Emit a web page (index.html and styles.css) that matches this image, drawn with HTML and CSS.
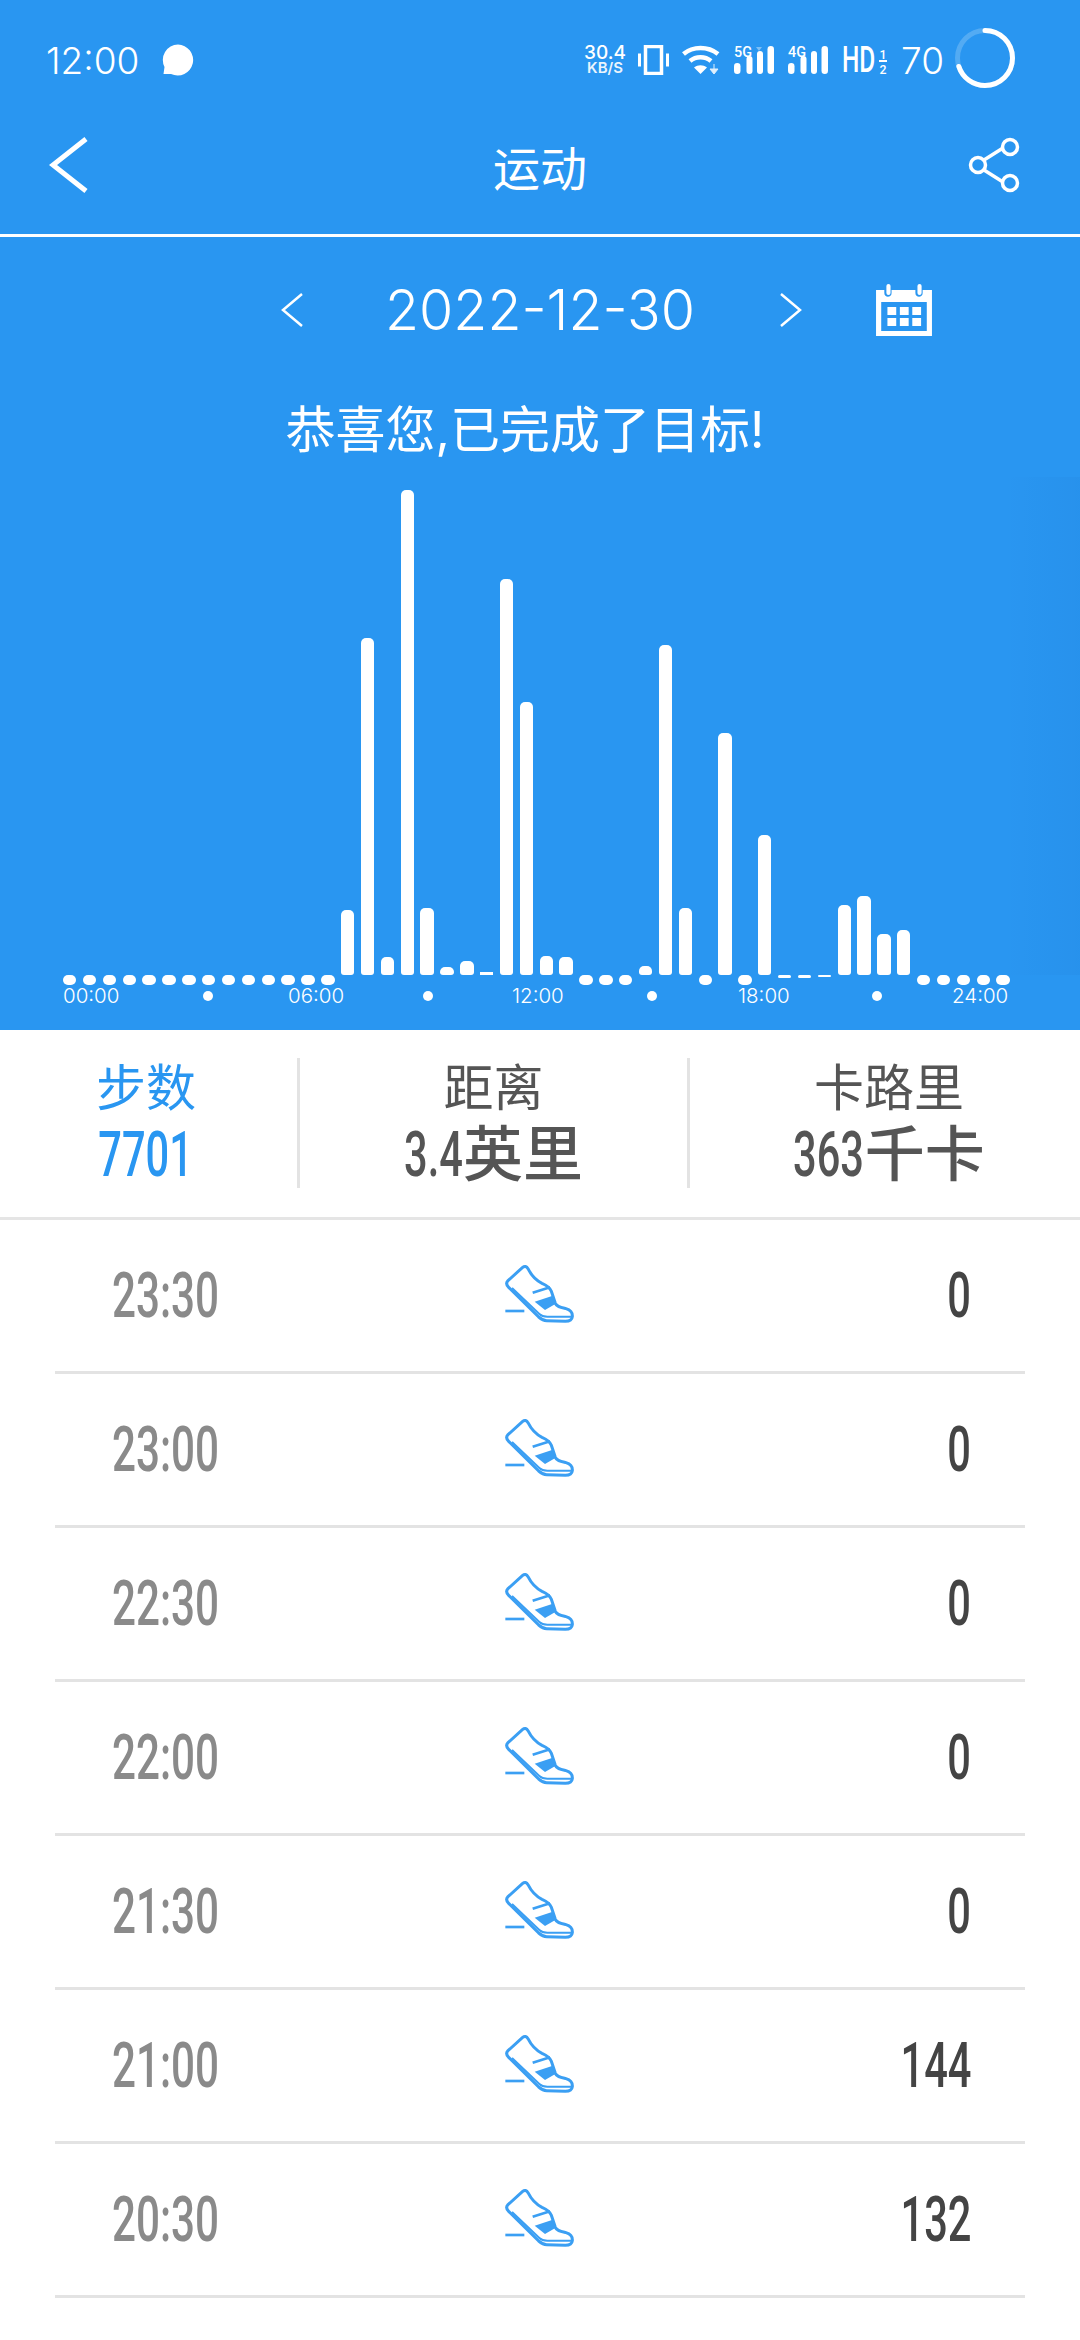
FILE: index.html
```html
<!DOCTYPE html>
<html lang="zh-CN">
<head>
    <meta charset="UTF-8">
    <meta name="viewport" content="width=device-width, initial-scale=1.0">
    <title>运动</title>
    <link rel="stylesheet" href="styles.css">
</head>
<body>
    <svg class="defs" width="0" height="0">
        <symbol id="shoe" viewBox="0 0 300 240">
            <path d="M46 183H103" fill="none" stroke="currentColor" stroke-width="8"/>
            <path d="M98 52C104 47 110 49 114 56C122 72 136 90 156 100C172 107 180 112 184 124L196 160C200 170 212 172 228 176C242 180 248 188 247 200C246 212 238 214 226 214L170 212C160 212 154 208 146 201L56 112C48 104 48 98 54 92Z" fill="none" stroke="currentColor" stroke-width="9" stroke-linejoin="round"/>
            <path d="M66 114L148 192C154 198 160 200 172 200L244 200" fill="none" stroke="currentColor" stroke-width="6"/>
            <path d="M128 128L180 112" fill="none" stroke="currentColor" stroke-width="8"/>
            <path d="M134 155L186 138L196 162L165 180Z" fill="currentColor"/>
        </symbol>
    </svg>

    <header class="top">
        <div class="status">
            <span class="clock">12:00</span>
            <svg class="msg" width="34" height="34" viewBox="0 0 34 34"><path d="M17 1.500A15.500 15.500 0 1 1 10 31L2.500 31L3.500 24A15.500 15.500 0 0 1 17 1.500Z" fill="#fff"/></svg>
            <span class="spacer"></span>
            <div class="speed"><span>30.4</span><span class="speed-unit">KB/S</span></div>
            <svg width="31" height="30" viewBox="0 0 31 30" class="ic-vib"><path d="M7.500 1.500H23.500V28.500H7.500Z" fill="none" stroke="#fff" stroke-width="3.500"/><path d="M1.500 8.500V21.500M29.500 8.500V21.500" stroke="#fff" stroke-width="3"/></svg>
            <svg width="38" height="30" viewBox="0 0 38 30" class="ic-wifi"><path d="M1.500 9C11 1 26 1 36 9" fill="none" stroke="#fff" stroke-width="4.500"/><path d="M8 16C14 11 23 11 29 16" fill="none" stroke="#fff" stroke-width="4.500"/><path d="M12 22.500C16 19.500 21 19.500 25 22.500L18.500 29Z" fill="#fff"/><path d="M32 19V24M28 24H36L32 29Z" fill="#fff" stroke="#fff" stroke-width="1" opacity=".85"/></svg>
            <svg width="40" height="40" viewBox="0 -5 40 40" class="ic-sig"><text x="0" y="12" class="sig-text" textLength="18" lengthAdjust="spacingAndGlyphs">5G</text><path d="M22 2H28L25 6Z" fill="#fff" opacity=".4"/><rect x="0" y="18" width="6.500" height="11" rx="3.250" fill="#fff"/><rect x="12.500" y="11" width="6" height="18" rx="3" fill="#fff"/><rect x="23" y="6" width="6" height="23" rx="3" fill="#fff"/><rect x="33.500" y="1" width="6.500" height="28" rx="3.250" fill="#fff"/></svg>
            <svg width="40" height="40" viewBox="0 -5 40 40" class="ic-sig"><text x="0" y="12" class="sig-text" textLength="18" lengthAdjust="spacingAndGlyphs">4G</text><rect x="0" y="18" width="6.500" height="11" rx="3.250" fill="#fff"/><rect x="12.500" y="11" width="6" height="18" rx="3" fill="#fff"/><rect x="23" y="6" width="6" height="23" rx="3" fill="#fff"/><rect x="33.500" y="1" width="6.500" height="28" rx="3.250" fill="#fff"/></svg>
            <span class="hd">HD</span>
            <svg width="8" height="44" viewBox="0 0 8 44" class="ic-half"><text x="0.500" y="21" class="hd-small" textLength="7" lengthAdjust="spacingAndGlyphs">1</text><path d="M0 23H8" stroke="#fff" stroke-width="2"/><text x="0.500" y="35.500" class="hd-small" textLength="7" lengthAdjust="spacingAndGlyphs">2</text></svg>
            <span class="batt-num">70</span>
            <svg class="batt" width="62" height="62" viewBox="0 0 62 62">
                <circle cx="31" cy="31" r="27.500" fill="none" stroke="#fff" stroke-opacity=".2" stroke-width="5"/>
                <circle cx="31" cy="31" r="27.500" fill="none" stroke="#fff" stroke-width="5" stroke-linecap="round" pathLength="100" stroke-dasharray="70 30" transform="rotate(-90 31 31)"/>
            </svg>
        </div>

        <div class="nav">
            <svg width="40" height="60" viewBox="0 0 40 60"><path d="M37 4L4 30L37 56" fill="none" stroke="#fff" stroke-width="5"/></svg>
            <h1 class="nav-title">运动</h1>
            <svg class="ic-share" width="54" height="56" viewBox="0 0 54 56"><path d="M17 23L36 11M17 33L36 45" stroke="#fff" stroke-width="3.500"/><circle cx="43" cy="10" r="7.500" fill="none" stroke="#fff" stroke-width="3.500"/><circle cx="11" cy="28" r="7.500" fill="none" stroke="#fff" stroke-width="3.500"/><circle cx="43" cy="46" r="7.500" fill="none" stroke="#fff" stroke-width="3.500"/></svg>
        </div>
    </header>

    <section class="panel">
        <div class="date-row">
            <svg width="24" height="36" viewBox="0 0 24 36"><path d="M22 2L3 18L22 34" fill="none" stroke="#fff" stroke-width="2.500"/></svg>
            <span class="date">2022-12-30</span>
            <svg width="24" height="36" viewBox="0 0 24 36"><path d="M2 2L21 18L2 34" fill="none" stroke="#fff" stroke-width="2.500"/></svg>
            <svg class="cal" width="58" height="52" viewBox="0 0 56 52" preserveAspectRatio="none">
                <path d="M1 6H9V9C9 14 16 14 16 9V6H39V9C39 14 46 14 46 9V6H55V52H1Z" fill="#fff"/>
                <rect x="11" y="0" width="4" height="11" rx="2" fill="#fff"/><rect x="41" y="0" width="4" height="11" rx="2" fill="#fff"/>
                <rect x="6" y="18" width="44" height="29" fill="#2996f1"/>
                <rect x="12" y="23" width="8.500" height="8" fill="#fff"/><rect x="24" y="23" width="8.500" height="8" fill="#fff"/><rect x="36" y="23" width="8.500" height="8" fill="#fff"/>
                <rect x="12" y="34" width="8.500" height="8" fill="#fff"/><rect x="24" y="34" width="8.500" height="8" fill="#fff"/><rect x="36" y="34" width="8.500" height="8" fill="#fff"/>
            </svg>
        </div>
        <p class="congrats">恭喜您,已完成了目标!</p>

        <div class="bars">
            <i class="dot"></i><i class="dot"></i><i class="dot"></i><i class="dot"></i><i class="dot"></i><i class="dot"></i><i class="dot"></i>
            <i class="dot"></i><i class="dot"></i><i class="dot"></i><i class="dot"></i><i class="dot"></i><i class="dot"></i><i class="dot"></i>
            <i class="bar" style="height:65px"></i>
            <i class="bar" style="height:337px"></i>
            <i class="bar" style="height:18px"></i>
            <i class="bar" style="height:485px"></i>
            <i class="bar" style="height:67px"></i>
            <i class="bar" style="height:8px"></i>
            <i class="bar" style="height:14px"></i>
            <i class="bar flat" style="height:3px"></i>
            <i class="bar" style="height:396px"></i>
            <i class="bar" style="height:273px"></i>
            <i class="bar" style="height:19px"></i>
            <i class="bar" style="height:18px"></i>
            <i class="dot"></i><i class="dot"></i><i class="dot"></i>
            <i class="bar" style="height:9px"></i>
            <i class="bar" style="height:330px"></i>
            <i class="bar" style="height:67px"></i>
            <i class="dot"></i>
            <i class="bar" style="height:242px"></i>
            <i class="dot"></i>
            <i class="bar" style="height:140px"></i>
            <i class="dash"></i><i class="dash"></i><i class="dash thin"></i>
            <i class="bar" style="height:70px"></i>
            <i class="bar" style="height:79px"></i>
            <i class="bar" style="height:41px"></i>
            <i class="bar" style="height:45px"></i>
            <i class="dot"></i><i class="dot"></i><i class="dot"></i><i class="dot"></i><i class="dot"></i>
        </div>
        <div class="axis">
            <span>00:00</span><i class="tick"></i>
            <span>06:00</span><i class="tick"></i>
            <span>12:00</span><i class="tick"></i>
            <span>18:00</span><i class="tick"></i>
            <span>24:00</span>
        </div>
    </section>

    <section class="tabs">
        <div class="tab tab-on">
            <div class="tab-label">步数</div>
            <div class="tab-value"><span class="narrow">7701</span></div>
        </div>
        <div class="tab tab-mid">
            <div class="tab-label">距离</div>
            <div class="tab-value"><span class="narrow pull-a">3.4</span>英里</div>
        </div>
        <div class="tab tab-end">
            <div class="tab-label">卡路里</div>
            <div class="tab-value"><span class="narrow pull-b">363</span>千卡</div>
        </div>
    </section>

    <ul class="rows">
        <li class="row"><span class="time">23:30</span><svg class="shoe"><use href="#shoe"/></svg><span class="steps">0</span></li>
        <li class="row"><span class="time">23:00</span><svg class="shoe"><use href="#shoe"/></svg><span class="steps">0</span></li>
        <li class="row"><span class="time">22:30</span><svg class="shoe"><use href="#shoe"/></svg><span class="steps">0</span></li>
        <li class="row"><span class="time">22:00</span><svg class="shoe"><use href="#shoe"/></svg><span class="steps">0</span></li>
        <li class="row"><span class="time">21:30</span><svg class="shoe"><use href="#shoe"/></svg><span class="steps">0</span></li>
        <li class="row"><span class="time">21:00</span><svg class="shoe"><use href="#shoe"/></svg><span class="steps">144</span></li>
        <li class="row"><span class="time">20:30</span><svg class="shoe"><use href="#shoe"/></svg><span class="steps">132</span></li>
    </ul>
</body>
</html>
```

FILE: styles.css
```css
*{
    box-sizing: border-box;
}
html, body{
    margin: 0;
    height: 2340px;
    overflow: hidden;
    background-color: #fff;
}
body{
    font-family: Inter, "Noto Sans CJK SC", sans-serif;
}
.defs{
    display: block;
    height: 0;
}

/* blue header */
.top{
    background-color: #2996f1;
    color: #fff;
    height: 237px;
    border-bottom: 3px solid #fff;
}
.status{
    height: 100px;
    padding: 20px 64px 0 46px;
    display: flex;
    align-items: center;
}
.clock{
    font-size: 37px;
    font-weight: 350;
}
.msg{
    margin-left: 22px;
}
.spacer{
    flex: 1;
}
.speed{
    display: flex;
    flex-direction: column;
    align-items: center;
    font-size: 19px;
    line-height: 16px;
    font-weight: 500;
}
.speed-unit{
    font-size: 15px;
    line-height: 14px;
    font-weight: 600;
    opacity: .9;
}
.ic-vib{
    margin-left: 12px;
}
.ic-wifi{
    margin-left: 13px;
}
.ic-sig{
    margin-left: 14px;
}
.sig-text, .hd-small{
    font-family: Roboto, sans-serif;
    fill: #fff;
    font-weight: 500;
}
.sig-text{
    font-size: 15px;
}
.hd-small{
    font-size: 12px;
}
.hd{
    display: inline-block;
    margin: 0 -16px 0 14px;
    font-family: Roboto, sans-serif;
    font-size: 36px;
    font-weight: 500;
    transform: scaleX(.68);
    transform-origin: left center;
}
.ic-half{
    margin-left: 4px;
}
.batt-num{
    margin-left: 14px;
    font-size: 37px;
    font-weight: 350;
}
.batt{
    margin-left: 10px;
    margin-top: -4px;
}
.nav{
    height: 134px;
    padding: 0 59px 4px 49px;
    display: grid;
    grid-template-columns: 1fr auto 1fr;
    align-items: center;
}
.nav-title{
    margin: 0 0 0 10px;
    font-size: 47px;
    font-weight: 400;
}
.ic-share{
    justify-self: end;
}

/* date + chart */
.panel{
    background-color: #2996f1;
    color: #fff;
    height: 793px;
}
.date-row{
    height: 146px;
    padding-left: 280px;
    display: flex;
    align-items: center;
}
.date{
    margin: 0 84px 0 81px;
    font-size: 55.500px;
    font-weight: 350;
    line-height: 1;
}
.cal{
    margin-left: 72px;
}
.congrats{
    margin: 0;
    height: 94px;
    text-align: center;
    font-size: 50px;
    font-weight: 400;
    line-height: 94px;
    padding-right: 30px;
}
.bars{
    height: 498px;
    padding: 0 70px 0 63px;
    display: flex;
    justify-content: space-between;
    align-items: flex-end;
    background-image: linear-gradient(90deg, transparent 93%, rgba(0, 40, 120, .04));
}
.bar, .dot, .dash{
    display: block;
    width: 13.400px;
    background-color: #fff;
}
.bar{
    border-radius: 5px 5px 3px 3px;
}
.bar.flat{
    border-radius: 0;
}
.dot{
    height: 10px;
    margin-bottom: -10px;
    border-radius: 5px;
}
.dash{
    height: 3px;
    margin-bottom: -3px;
    border-radius: 2px;
}
.dash.thin{
    height: 2px;
    margin-bottom: -2px;
}
.axis{
    margin-top: 10px;
    padding-left: 63px;
    display: grid;
    grid-template-columns: 140px 85px 135px 89px 135px 91px 134px 80px auto;
    align-items: center;
    font-size: 20.500px;
    font-weight: 300;
    line-height: 22px;
}
.tick{
    display: block;
    width: 10px;
    height: 10px;
    border-radius: 50%;
    background-color: #fff;
}

/* summary tabs */
.tabs{
    height: 190px;
    padding-top: 28px;
    display: flex;
    border-bottom: 3px solid #e5e5e5;
    color: #555;
}
.tab{
    height: 130px;
    text-align: center;
}
.tab-on{
    width: 300px;
    padding-right: 5px;
    color: #2996f1;
    border-right: 3px solid #e3e3e3;
}
.tab-mid{
    width: 390px;
    padding-right: 0;
    border-right: 3px solid #e3e3e3;
}
.tab-end{
    flex: 1;
    padding-left: 8px;
}
.tab-label{
    font-size: 50px;
    line-height: 60px;
    font-weight: 400;
}
.tab-value{
    font-size: 60px;
    line-height: 66px;
    font-weight: 500;
    margin-top: 3px;
    white-space: nowrap;
}
.narrow, .steps{
    display: inline-block;
    font-family: Roboto, sans-serif;
    font-size: 63px;
    font-weight: 500;
    transform: scaleX(.66);
}
.time{
    display: inline-block;
    font-family: Roboto, sans-serif;
    font-size: 63px;
    font-weight: 500;
    transform: scaleX(.67);
}
.pull-a{
    transform-origin: left center;
    margin-right: -30px;
}
.pull-b{
    transform-origin: left center;
    margin-right: -36px;
}

/* half hour list */
.rows{
    list-style: none;
    margin: 0;
    padding: 0 55px;
}
.row{
    height: 154px;
    display: grid;
    grid-template-columns: 1fr 70px 1fr;
    align-items: center;
    border-bottom: 3px solid #e3e3e3;
}
.time{
    justify-self: start;
    margin-left: 57px;
    color: #8a8a8a;
    transform-origin: left center;
}
.steps{
    justify-self: end;
    margin-right: 54px;
    color: #444;
    transform-origin: right center;
}
.shoe{
    width: 100px;
    height: 80px;
    margin: 0 0 12px -15px;
    color: #3b9ff3;
}
```
